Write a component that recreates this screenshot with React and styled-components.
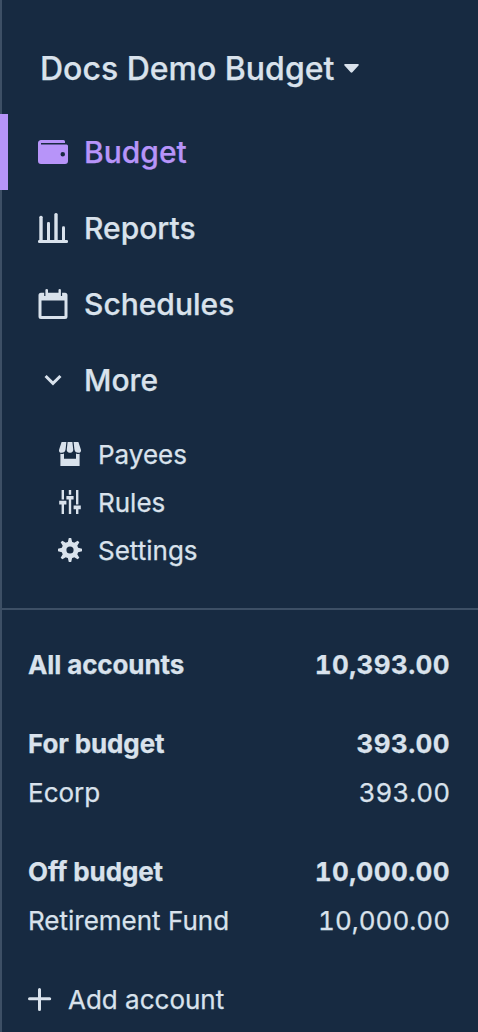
import React from "react";
import styled, { createGlobalStyle } from "styled-components";

const primaryItems = [
  { label: "Budget", icon: WalletIcon, active: true },
  { label: "Reports", icon: ReportsIcon },
  { label: "Schedules", icon: CalendarIcon },
  { label: "More", icon: ChevronIcon },
];

const secondaryItems = [
  { label: "Payees", icon: StoreIcon },
  { label: "Rules", icon: TuningIcon },
  { label: "Settings", icon: CogIcon },
];

const accountGroups = [
  { name: "All accounts", balance: "10,393.00", accounts: [] },
  {
    name: "For budget",
    balance: "393.00",
    accounts: [{ name: "Ecorp", balance: "393.00" }],
  },
  {
    name: "Off budget",
    balance: "10,000.00",
    accounts: [{ name: "Retirement Fund", balance: "10,000.00" }],
  },
];

function App() {
  return (
    <>
      <GlobalStyle />
      <Sidebar>
        <BudgetName>
          Docs Demo Budget
          <CaretIcon />
        </BudgetName>

        <nav>
          {primaryItems.map(({ label, icon: Icon, active }) => (
            <NavItem key={label} $active={active}>
              <Icon />
              {label}
            </NavItem>
          ))}
          <SubNav>
            {secondaryItems.map(({ label, icon: Icon }) => (
              <SubNavItem key={label}>
                <Icon />
                {label}
              </SubNavItem>
            ))}
          </SubNav>
        </nav>

        <Accounts>
          {accountGroups.map((group) => (
            <AccountGroup key={group.name}>
              <AccountRow $bold>
                <span>{group.name}</span>
                <Balance $bold>{group.balance}</Balance>
              </AccountRow>
              {group.accounts.map((account) => (
                <AccountRow key={account.name}>
                  <span>{account.name}</span>
                  <Balance>{account.balance}</Balance>
                </AccountRow>
              ))}
            </AccountGroup>
          ))}
          <AddAccount>
            <PlusIcon />
            Add account
          </AddAccount>
        </Accounts>
      </Sidebar>
    </>
  );
}

export default App;

function CaretIcon() {
  return (
    <svg width="15" height="9" viewBox="0 0 15 9" fill="currentColor">
      <path d="M1.200 0h12.600c.9 0 1.300 1 .7 1.600L8.400 8.300c-.5.500-1.300.500-1.800 0L.5 1.600C-.1 1 .3 0 1.200 0z" />
    </svg>
  );
}

function WalletIcon() {
  return (
    <svg width="30" height="30" viewBox="0 0 20 20" fill="currentColor">
      <path d="M0 4c0-1.1.9-2 2-2h15a1 1 0 0 1 1 1v1H2v1h17a1 1 0 0 1 1 1v10a2 2 0 0 1-2 2H2a2 2 0 0 1-2-2V4zm16.5 9a1.5 1.5 0 1 0 0-3 1.5 1.5 0 0 0 0 3z" />
    </svg>
  );
}

function ReportsIcon() {
  return (
    <svg width="30" height="30" viewBox="0 0 30 30" fill="currentColor">
      <rect x="0" y="27" width="30" height="3" rx="1.3" />
      <rect x="1.300" y="2.800" width="3.400" height="26" rx="1.5" />
      <rect x="9" y="9" width="3" height="20" rx="1.3" />
      <rect x="16.300" y="0" width="3.400" height="29" rx="1.5" />
      <rect x="24" y="13.200" width="3" height="15" rx="1.3" />
    </svg>
  );
}

function CalendarIcon() {
  return (
    <svg width="30" height="30" viewBox="0 0 30 30" fill="currentColor">
      <path
        fillRule="evenodd"
        d="M3 3.800h3.200v3.200h1.200V1q0-1 1.300-1t1.300 1v2.800h10.500V1q0-1 1.200-1t1.200 1v6h1.200V3.800H27A2.500 2.500 0 0 1 29.500 6.300v21.200a2.500 2.500 0 0 1-2.500 2.500H3a2.500 2.500 0 0 1-2.500-2.500V6.300A2.500 2.500 0 0 1 3 3.800zM3.500 11.500v15.500h23V11.500z"
      />
    </svg>
  );
}

function ChevronIcon() {
  return (
    <svg width="30" height="30" viewBox="0 0 20 20" fill="currentColor">
      <path d="M9.293 12.95l.707.707L15.657 8l-1.414-1.414L10 10.828 5.757 6.586 4.343 8z" />
    </svg>
  );
}

function StoreIcon() {
  return (
    <svg width="24" height="24" viewBox="0 0 20 20" fill="currentColor">
      <path d="M18 9.87V20H2V9.87a4.25 4.25 0 0 0 3-.38V14h10V9.5a4.26 4.26 0 0 0 3 .37zM3 0h4l-.67 6.03A3.43 3.43 0 0 1 3 9C1.34 9 .42 7.73.95 6.15L3 0zm5 0h4l.7 6.3c.17 1.5-.91 2.7-2.42 2.7h-.56A2.38 2.38 0 0 1 7.3 6.3L8 0zm5 0h4l2.05 6.15C19.58 7.73 18.65 9 17 9a3.42 3.42 0 0 1-3.33-2.97L13 0z" />
    </svg>
  );
}

function TuningIcon() {
  return (
    <svg width="24" height="24" viewBox="0 0 20 20" fill="currentColor">
      <path d="M17 16v4h-2v-4h-2v-3h6v3h-2zM1 9h6v3H1V9zm6-4h6v3H7V5zM3 0h2v8H3V0zm12 0h2v12h-2V0zM9 0h2v4H9V0zM3 12h2v8H3v-8zm6-4h2v12H9V8z" />
    </svg>
  );
}

function CogIcon() {
  return (
    <svg width="24" height="24" viewBox="0 0 20 20" fill="currentColor">
      <path d="M3.94 6.5L2.22 3.64l1.42-1.42L6.5 3.94c.52-.3 1.1-.54 1.7-.7L9 0h2l.8 3.24c.6.16 1.18.4 1.7.7l2.86-1.72 1.42 1.42-1.72 2.86c.3.52.54 1.1.7 1.7L20 9v2l-3.24.8c-.16.6-.4 1.18-.7 1.7l1.72 2.86-1.42 1.42-2.86-1.72c-.52.3-1.1.54-1.7.7L11 20H9l-.8-3.24c-.6-.16-1.18-.4-1.7-.7l-2.86 1.72-1.42-1.42 1.72-2.86c-.3-.52-.54-1.1-.7-1.7L0 11V9l3.24-.8c.16-.6.4-1.18.7-1.7zM10 13a3 3 0 1 0 0-6 3 3 0 0 0 0 6z" />
    </svg>
  );
}

function PlusIcon() {
  return (
    <svg
      width="24"
      height="24"
      viewBox="0 0 24 24"
      stroke="currentColor"
      strokeWidth="3"
      strokeLinecap="round"
    >
      <path d="M11.500 1.500v20M1.500 10.800h20.200" />
    </svg>
  );
}

const GlobalStyle = createGlobalStyle`
  * {
    box-sizing: border-box;
  }

  body {
    margin: 0;
    background: #172a41;
  }
`;

const Sidebar = styled.aside`
  width: 100%;
  height: 1032px;
  overflow: hidden;
  background: linear-gradient(#3d4f65, #3d4f65) left / 2px 100% no-repeat
    #172a41;
  color: #d9e2ec;
  font-family: Inter, "Liberation Sans", sans-serif;
  -webkit-text-stroke: 0.25px currentColor;
`;

const BudgetName = styled.div`
  display: flex;
  align-items: center;
  gap: 10px;
  height: 114px;
  padding: 22px 0 0 40px;
  font-size: 32px;
  font-weight: 500;
`;

const NavItem = styled.div`
  display: flex;
  align-items: center;
  gap: 16px;
  height: 76px;
  padding-left: 30px;
  border-left: 8px solid ${({ $active }) => ($active ? "#b794f9" : "transparent")};
  color: ${({ $active }) => ($active ? "#b794f9" : "inherit")};
  font-size: 30px;
  font-weight: 500;
`;

const SubNav = styled.div`
  padding: 12px 0 34px 58px;
`;

const SubNavItem = styled.div`
  display: flex;
  align-items: center;
  gap: 16px;
  height: 48px;
  font-size: 26px;
`;

const Accounts = styled.section`
  padding: 30px 28px 0;
  border-top: 2px solid #3d4f65;
`;

const AccountGroup = styled.div`
  margin-bottom: 30px;
`;

const AccountRow = styled.div`
  display: flex;
  align-items: center;
  justify-content: space-between;
  height: 49px;
  font-size: 26px;
  font-weight: ${({ $bold }) => ($bold ? 700 : 400)};
  letter-spacing: ${({ $bold }) => ($bold ? "-0.12px" : "normal")};
`;

const Balance = styled.span`
  font-feature-settings: "tnum";
  letter-spacing: ${({ $bold }) => ($bold ? "0.4px" : "normal")};
`;

const AddAccount = styled.div`
  display: flex;
  align-items: center;
  gap: 16px;
  height: 49px;
  font-size: 26px;
`;
